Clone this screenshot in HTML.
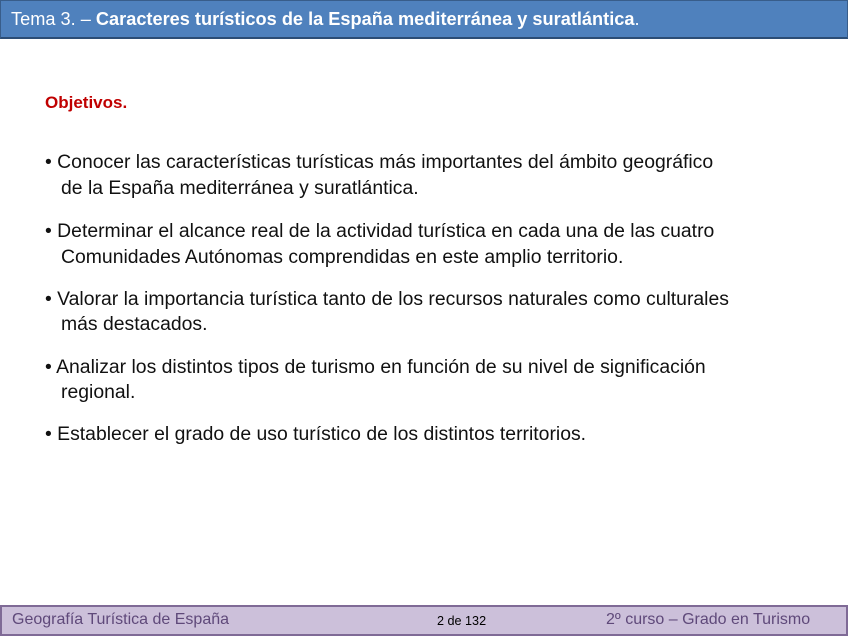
<!DOCTYPE html>
<html><head><meta charset="utf-8"><style>
body{margin:0;width:848px;height:636px;position:relative;background:#fff;font-family:"Liberation Sans",sans-serif;overflow:hidden}
.hdr{position:absolute;left:0;top:0;width:846px;height:36px;background:#4f81bd;border:1px solid #385d8a;border-bottom:2px solid #2c4d75}
.hdr span{position:absolute;left:10px;top:8px;color:#fff;font-size:18px;white-space:nowrap;transform:scaleX(1.01);transform-origin:left}
.ftr{position:absolute;left:0;top:605px;width:844px;height:27px;background:#ccc0da;border:2px solid #7f6a96}
.ftr span{position:absolute;top:4px;font-size:16px;color:#5f497a;white-space:nowrap;transform-origin:left}
.l{position:absolute;white-space:nowrap;font-size:19px;color:#111;transform:scaleX(1.02);transform-origin:left}
</style></head><body>
<div class="hdr"><span>Tema 3. – <b>Caracteres turísticos de la España mediterránea y suratlántica</b>.</span></div>
<div class="l" style="left:45px;top:93px;color:#c00000;font-weight:bold;font-size:17px;transform:scaleX(1.0)">Objetivos.</div>
<div class="l" style="left:45px;top:152px">• Conocer las características turísticas más importantes del ámbito geográfico</div>
<div class="l" style="left:61px;top:178px">de la España mediterránea y suratlántica.</div>
<div class="l" style="left:45px;top:221px">• Determinar el alcance real de la actividad turística en cada una de las cuatro</div>
<div class="l" style="left:61px;top:247px">Comunidades Autónomas comprendidas en este amplio territorio.</div>
<div class="l" style="left:45px;top:289px">• Valorar la importancia turística tanto de los recursos naturales como culturales</div>
<div class="l" style="left:61px;top:314px">más destacados.</div>
<div class="l" style="left:45px;top:357px">• Analizar los distintos tipos de turismo en función de su nivel de significación</div>
<div class="l" style="left:61px;top:382px">regional.</div>
<div class="l" style="left:45px;top:424px">• Establecer el grado de uso turístico de los distintos territorios.</div>
<div class="ftr"><span style="left:10px;transform:scaleX(1.0)">Geografía Turística de España</span><span style="left:435px;font-size:13px;top:6px;color:#000;transform:scaleX(0.97)">2 de 132</span><span style="left:604px;transform:scaleX(1.0)">2º curso – Grado en Turismo</span></div>
</body></html>
